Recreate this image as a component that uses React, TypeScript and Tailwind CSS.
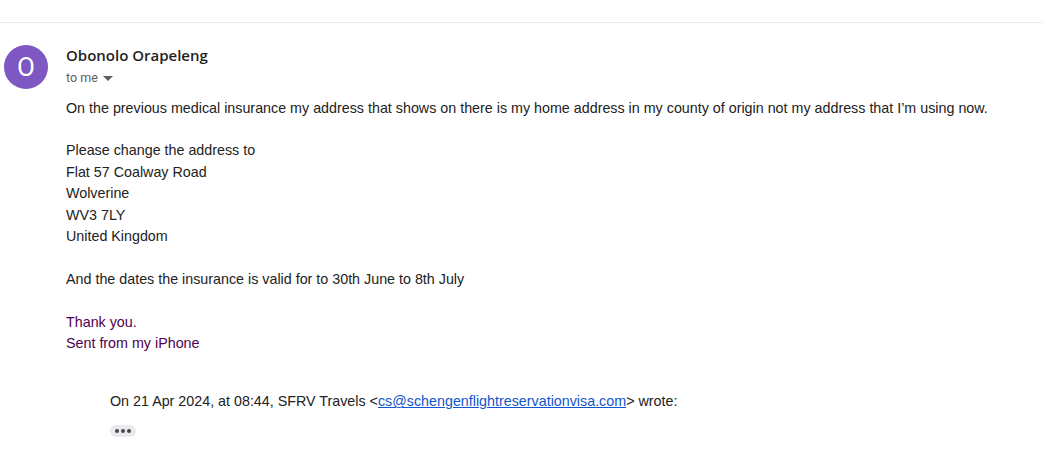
import React from "react";

export default function App() {
  return (
    <div className="w-[1043px] h-[459px] bg-white overflow-hidden font-['Liberation_Sans',Arial,sans-serif] text-[#222222]">
      <div className="h-[23px] border-b border-[#e8eaed]" />
      <div className="flex pt-[22px] pl-[4px]">
        <div className="w-[44px] h-[44px] rounded-full bg-[#7e57c2] flex items-center justify-center text-white text-[26px] font-['Roboto',sans-serif] shrink-0">
          O
        </div>
        <div className="ml-[18px] flex-1">
          <div className="h-[44px] flex flex-col justify-center">
            <div className="font-['Open_Sans',sans-serif] font-semibold text-[15px] leading-[20px] text-[#1f1f1f] -mt-[4px]">
              Obonolo Orapeleng
            </div>
            <div className="mt-[3px] -mb-[3px] flex items-center text-[12.5px] leading-[20px] text-[#5e5e5e] font-['Roboto',sans-serif]">
              to me
              <svg width="10" height="10" viewBox="0 0 10 10" className="ml-[5px]">
                <path d="M0 3 L10 3 L5 8 Z" fill="#5e5e5e" />
              </svg>
            </div>
          </div>
          <div className="mt-[9px] text-[14.3px] leading-[21.4px]">
            <div>On the previous medical insurance my address that shows on there is my home address in my county of origin not my address that I’m using now.</div>
            <div className="h-[21px]" />
            <div>Please change the address to</div>
            <div>Flat 57 Coalway Road</div>
            <div>Wolverine</div>
            <div>WV3 7LY</div>
            <div>United Kingdom</div>
            <div className="h-[21.4px]" />
            <div>And the dates the insurance is valid for to 30th June to 8th July</div>
            <div className="h-[21.4px]" />
            <div className="text-[#500050]">Thank you.</div>
            <div className="text-[#500050]">Sent from my iPhone</div>
          </div>
          <div className="ml-[44px] mt-[37px] text-[14.3px] leading-[21.4px]">
            <div>
              On 21 Apr 2024, at 08:44, SFRV Travels &lt;
              <a className="text-[#1155cc] underline">cs@schengenflightreservationvisa.com</a>
              &gt; wrote:
            </div>
            <button className="mt-[12px] w-[26px] h-[12px] rounded-full bg-[#e8eaed] flex items-center justify-center gap-[2px]">
              <span className="w-[4px] h-[4px] rounded-full bg-[#444746]" />
              <span className="w-[4px] h-[4px] rounded-full bg-[#444746]" />
              <span className="w-[4px] h-[4px] rounded-full bg-[#444746]" />
            </button>
          </div>
        </div>
      </div>
    </div>
  );
}
